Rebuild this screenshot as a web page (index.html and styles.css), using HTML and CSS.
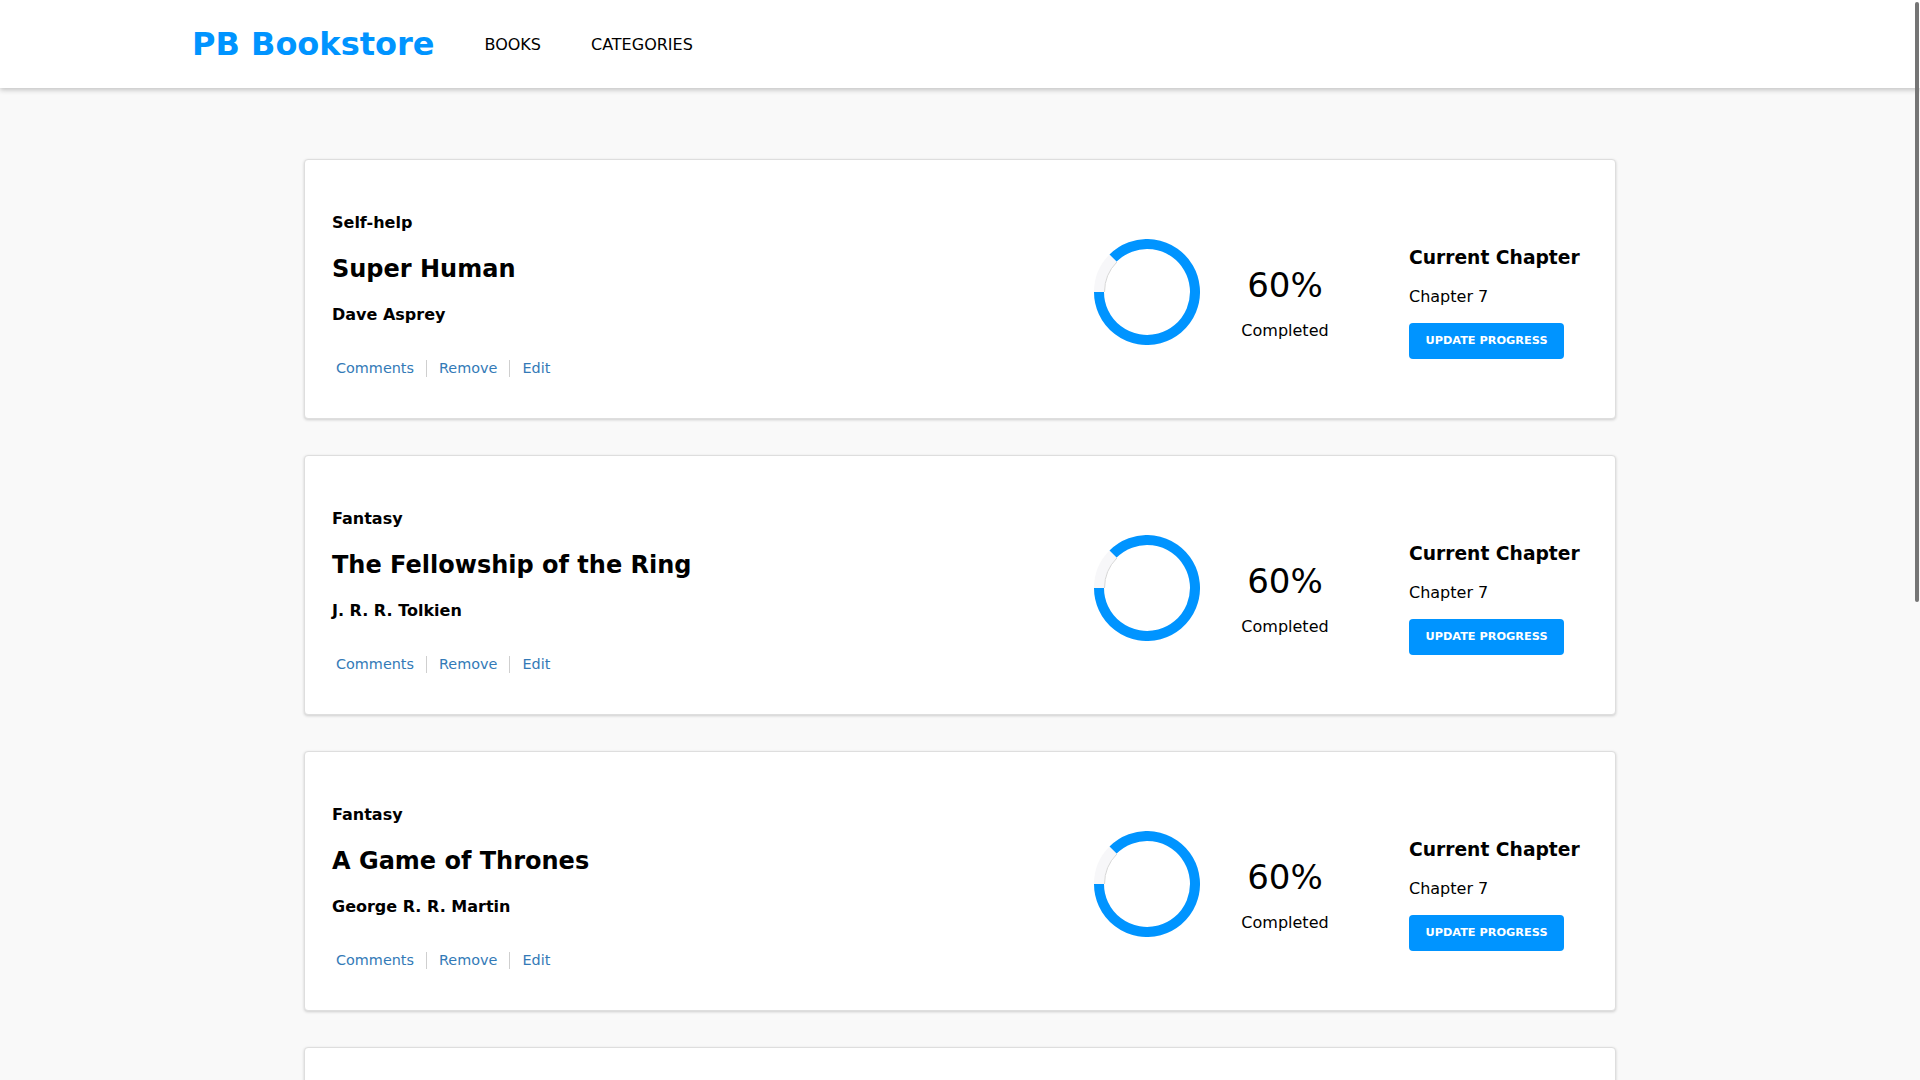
FILE: index.html
```html
<!DOCTYPE html>
<html lang="en">
<head>
<meta charset="utf-8">
<title>PB Bookstore</title>
<link rel="stylesheet" href="styles.css">
</head>
<body>
<header class="navbar">
  <div class="nav-inner">
    <a class="brand" href="#">PB Bookstore</a>
    <nav class="nav-links">
      <a href="#">BOOKS</a>
      <a href="#">CATEGORIES</a>
    </nav>
  </div>
</header>

<main class="book-list">
  <article class="book-card">
    <div class="book-info">
      <div class="category">Self-help</div>
      <h2 class="title">Super Human</h2>
      <div class="author">Dave Asprey</div>
      <div class="actions"><a href="#">Comments</a><span class="sep"></span><a href="#">Remove</a><span class="sep"></span><a href="#">Edit</a></div>
    </div>
    <svg class="ring" viewBox="0 0 106 106" width="106" height="106">
      <circle cx="53" cy="53" r="48" fill="none" stroke="#f7f7f9" stroke-width="10"/>
      <path d="M53 53 m-42.5 0 A42.5 42.5 0 0 1 22.95 22.95" fill="none" stroke="#d6d6d6" stroke-width="1"/>
      <path d="M19.06 19.06 A48 48 0 1 1 5 53" fill="none" stroke="#0094ff" stroke-width="10"/>
    </svg>
    <div class="percent"><div class="pct-value">60%</div><div class="pct-label">Completed</div></div>
    <div class="chapter">
      <h3 class="chapter-head">Current Chapter</h3>
      <div class="chapter-name">Chapter 7</div>
      <button class="btn">Update Progress</button>
    </div>
  </article>

  <article class="book-card">
    <div class="book-info">
      <div class="category">Fantasy</div>
      <h2 class="title">The Fellowship of the Ring</h2>
      <div class="author">J. R. R. Tolkien</div>
      <div class="actions"><a href="#">Comments</a><span class="sep"></span><a href="#">Remove</a><span class="sep"></span><a href="#">Edit</a></div>
    </div>
    <svg class="ring" viewBox="0 0 106 106" width="106" height="106">
      <circle cx="53" cy="53" r="48" fill="none" stroke="#f7f7f9" stroke-width="10"/>
      <path d="M53 53 m-42.5 0 A42.5 42.5 0 0 1 22.95 22.95" fill="none" stroke="#d6d6d6" stroke-width="1"/>
      <path d="M19.06 19.06 A48 48 0 1 1 5 53" fill="none" stroke="#0094ff" stroke-width="10"/>
    </svg>
    <div class="percent"><div class="pct-value">60%</div><div class="pct-label">Completed</div></div>
    <div class="chapter">
      <h3 class="chapter-head">Current Chapter</h3>
      <div class="chapter-name">Chapter 7</div>
      <button class="btn">Update Progress</button>
    </div>
  </article>

  <article class="book-card">
    <div class="book-info">
      <div class="category">Fantasy</div>
      <h2 class="title">A Game of Thrones</h2>
      <div class="author">George R. R. Martin</div>
      <div class="actions"><a href="#">Comments</a><span class="sep"></span><a href="#">Remove</a><span class="sep"></span><a href="#">Edit</a></div>
    </div>
    <svg class="ring" viewBox="0 0 106 106" width="106" height="106">
      <circle cx="53" cy="53" r="48" fill="none" stroke="#f7f7f9" stroke-width="10"/>
      <path d="M53 53 m-42.5 0 A42.5 42.5 0 0 1 22.95 22.95" fill="none" stroke="#d6d6d6" stroke-width="1"/>
      <path d="M19.06 19.06 A48 48 0 1 1 5 53" fill="none" stroke="#0094ff" stroke-width="10"/>
    </svg>
    <div class="percent"><div class="pct-value">60%</div><div class="pct-label">Completed</div></div>
    <div class="chapter">
      <h3 class="chapter-head">Current Chapter</h3>
      <div class="chapter-name">Chapter 7</div>
      <button class="btn">Update Progress</button>
    </div>
  </article>

  <article class="book-card">
    <div class="book-info">
      <div class="category">Economy</div>
      <h2 class="title">Capital in the Twenty-First Century</h2>
      <div class="author">Thomas Piketty</div>
      <div class="actions"><a href="#">Comments</a><span class="sep"></span><a href="#">Remove</a><span class="sep"></span><a href="#">Edit</a></div>
    </div>
    <svg class="ring" viewBox="0 0 106 106" width="106" height="106">
      <circle cx="53" cy="53" r="48" fill="none" stroke="#f7f7f9" stroke-width="10"/>
      <path d="M53 53 m-42.5 0 A42.5 42.5 0 0 1 22.95 22.95" fill="none" stroke="#d6d6d6" stroke-width="1"/>
      <path d="M19.06 19.06 A48 48 0 1 1 5 53" fill="none" stroke="#0094ff" stroke-width="10"/>
    </svg>
    <div class="percent"><div class="pct-value">60%</div><div class="pct-label">Completed</div></div>
    <div class="chapter">
      <h3 class="chapter-head">Current Chapter</h3>
      <div class="chapter-name">Chapter 7</div>
      <button class="btn">Update Progress</button>
    </div>
  </article>

  <article class="book-card">
    <div class="book-info">
      <div class="category">Science Fiction</div>
      <h2 class="title">Dune</h2>
      <div class="author">Frank Herbert</div>
      <div class="actions"><a href="#">Comments</a><span class="sep"></span><a href="#">Remove</a><span class="sep"></span><a href="#">Edit</a></div>
    </div>
    <svg class="ring" viewBox="0 0 106 106" width="106" height="106">
      <circle cx="53" cy="53" r="48" fill="none" stroke="#f7f7f9" stroke-width="10"/>
      <path d="M53 53 m-42.5 0 A42.5 42.5 0 0 1 22.95 22.95" fill="none" stroke="#d6d6d6" stroke-width="1"/>
      <path d="M19.06 19.06 A48 48 0 1 1 5 53" fill="none" stroke="#0094ff" stroke-width="10"/>
    </svg>
    <div class="percent"><div class="pct-value">60%</div><div class="pct-label">Completed</div></div>
    <div class="chapter">
      <h3 class="chapter-head">Current Chapter</h3>
      <div class="chapter-name">Chapter 7</div>
      <button class="btn">Update Progress</button>
    </div>
  </article>

  <article class="book-card">
    <div class="book-info">
      <div class="category">Self-help</div>
      <h2 class="title">Atomic Habits</h2>
      <div class="author">James Clear</div>
      <div class="actions"><a href="#">Comments</a><span class="sep"></span><a href="#">Remove</a><span class="sep"></span><a href="#">Edit</a></div>
    </div>
    <svg class="ring" viewBox="0 0 106 106" width="106" height="106">
      <circle cx="53" cy="53" r="48" fill="none" stroke="#f7f7f9" stroke-width="10"/>
      <path d="M53 53 m-42.5 0 A42.5 42.5 0 0 1 22.95 22.95" fill="none" stroke="#d6d6d6" stroke-width="1"/>
      <path d="M19.06 19.06 A48 48 0 1 1 5 53" fill="none" stroke="#0094ff" stroke-width="10"/>
    </svg>
    <div class="percent"><div class="pct-value">60%</div><div class="pct-label">Completed</div></div>
    <div class="chapter">
      <h3 class="chapter-head">Current Chapter</h3>
      <div class="chapter-name">Chapter 7</div>
      <button class="btn">Update Progress</button>
    </div>
  </article>
</main>

<div class="scroll-thumb"></div>
</body>
</html>
```
FILE: styles.css
```css
html {
  background: #f9f9f9;
}
body {
  margin: 0;
  background: #f9f9f9;
  font-family: "DejaVu Sans", Verdana, sans-serif;
  color: #000;
}
a {
  text-decoration: none;
}

/* overlay scrollbar thumb drawn over the page edge */
.scroll-thumb {
  position: fixed;
  top: 2px;
  right: 1px;
  width: 4px;
  height: 600px;
  border-radius: 2px;
  background: #757575;
  z-index: 10;
}

.navbar {
  height: 88px;
  background: #fff;
  box-shadow: 0 2px 5px rgba(0, 0, 0, 0.22);
  position: relative;
  z-index: 1;
}
.nav-inner {
  max-width: 1536px;
  height: 100%;
  margin: 0 auto;
  display: flex;
  align-items: center;
}
.brand {
  font-size: 32px;
  font-weight: bold;
  color: #0094ff;
  margin-right: 50px;
  line-height: 38px;
}
.nav-links {
  display: flex;
  gap: 50px;
  padding-top: 1px;
}
.nav-links a {
  font-size: 16px;
  color: #000;
  line-height: 19px;
}

.book-list {
  width: 1312px;
  margin: 0 auto;
  padding: 71px 0 45px;
  display: flex;
  flex-direction: column;
  gap: 36px;
}
.book-card {
  box-sizing: border-box;
  background: #fff;
  border: 1px solid #dedede;
  border-radius: 4px;
  box-shadow: 0 1px 3px rgba(0, 0, 0, 0.18);
  padding: 53px 28px 41px 27px;
  display: flex;
  align-items: center;
}
.book-info {
  flex: 1;
  min-width: 0;
}
.category {
  font-size: 16px;
  font-weight: bold;
  line-height: 19px;
  margin-bottom: 23px;
}
.title {
  margin: 0 0 22px;
  font-size: 24px;
  font-weight: bold;
  line-height: 28px;
}
.author {
  font-size: 16px;
  font-weight: bold;
  line-height: 19px;
  margin-bottom: 36px;
}
.actions {
  display: flex;
  align-items: center;
  height: 17px;
  font-size: 14.4px;
  line-height: 17px;
}
.actions a {
  color: #337ab7;
  padding: 0 4px;
}
.sep {
  width: 1px;
  height: 17px;
  background: #cfcfcf;
  margin: 0 8px;
}

.ring {
  display: block;
  width: 106px;
  height: 106px;
  margin-right: 20px;
  margin-bottom: 6px;
  flex: none;
}
.percent {
  width: 130px;
  margin-right: 59px;
  margin-top: 14px;
  text-align: center;
  flex: none;
}
.pct-value {
  font-size: 34px;
  line-height: 40px;
}
.pct-label {
  margin-top: 16px;
  font-size: 16px;
  line-height: 19px;
}
.chapter {
  width: 178px;
  margin-top: 15px;
  flex: none;
}
.chapter-head {
  margin: 0 0 18px;
  font-size: 18.7px;
  font-weight: bold;
  line-height: 22px;
}
.chapter-name {
  font-size: 16px;
  line-height: 19px;
  margin-bottom: 17px;
}
.btn {
  display: block;
  width: 155px;
  height: 36px;
  padding: 0;
  border: none;
  border-radius: 4px;
  background: #0094ff;
  color: #fff;
  font-family: "DejaVu Sans", Verdana, sans-serif;
  font-size: 11.3px;
  font-weight: bold;
  text-transform: uppercase;
  cursor: pointer;
}
```
